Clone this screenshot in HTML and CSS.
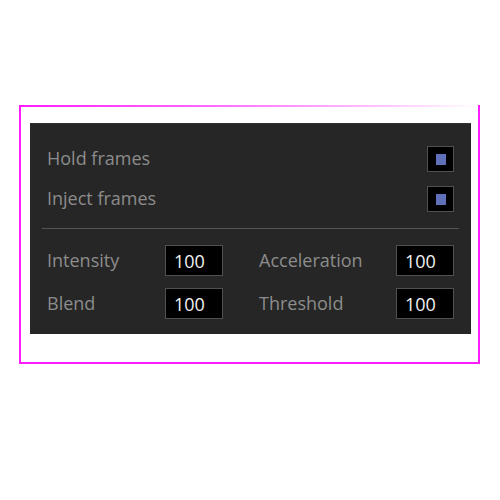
FILE: index.html
```html
<!DOCTYPE HTML>
<html>
<head>
<link rel="stylesheet" href="styles.css">
</head>
<body>
<div class="frame">
  <div class="frame-top"></div>
  <div class="panel">
    <!--toggles-->
    <div class="toggle">
      <span class="label">Hold frames</span>
      <span class="check"><span class="mark"></span></span>
    </div>
    <div class="toggle">
      <span class="label">Inject frames</span>
      <span class="check"><span class="mark"></span></span>
    </div>
    <div class="rule"></div>
    <!--values-->
    <div class="values">
      <span class="label">Intensity</span>
      <span class="num">100</span>
      <span class="label second">Acceleration</span>
      <span class="num">100</span>
      <span class="label">Blend</span>
      <span class="num">100</span>
      <span class="label second">Threshold</span>
      <span class="num">100</span>
    </div>
  </div>
</div>
</body>
</html>
```

FILE: styles.css
```css
body
{
  margin: 0;
  background: #fff;
  font-family: "Open Sans", sans-serif;
}
.frame
{
  width: 457px;
  margin: 105px 0 0 19px;
  border-left: 2px solid #ff1cff;
  border-right: 2px solid #ff1cff;
  border-bottom: 2px solid #ff1cff;
  padding-bottom: 28px;
}
/* top edge fades out to the right */
.frame-top
{
  height: 2px;
  margin-left: -2px;
  background: linear-gradient(to right, #ff1cff 0%, #ff70ff 45%, #ffe0ff 90%, #fff 100%);
}
.panel
{
  margin: 16px 7px 0 9px;
  background: #262626;
  border-top: 1px solid #333;
  padding: 15px 17px 15px 17px;
}
.toggle
{
  display: flex;
  align-items: center;
  justify-content: space-between;
  height: 40px;
}
.label
{
  color: #8c8c8c;
  font-size: 18px;
  line-height: 24px;
}
.toggle .label
{
  margin-top: -3px;
}
.values .label
{
  margin-top: -1px;
}
.check
{
  width: 25px;
  height: 24px;
  border: 1px solid #505050;
  background: #000;
  display: flex;
  align-items: center;
  justify-content: center;
}
.mark
{
  width: 10px;
  height: 11px;
  background: #6071b9;
}
.rule
{
  height: 1px;
  background: #555;
  margin: 9px -5px 16px -5px;
}
.values
{
  display: grid;
  grid-template-columns: 118px 58px 1fr 58px;
  row-gap: 12px;
  align-items: center;
}
.second
{
  padding-left: 36px;
}
.num
{
  box-sizing: border-box;
  height: 31px;
  border: 1px solid #505050;
  background: #000;
  color: #f2f2f2;
  font-size: 18px;
  line-height: 31px;
  padding-left: 8px;
}
```
